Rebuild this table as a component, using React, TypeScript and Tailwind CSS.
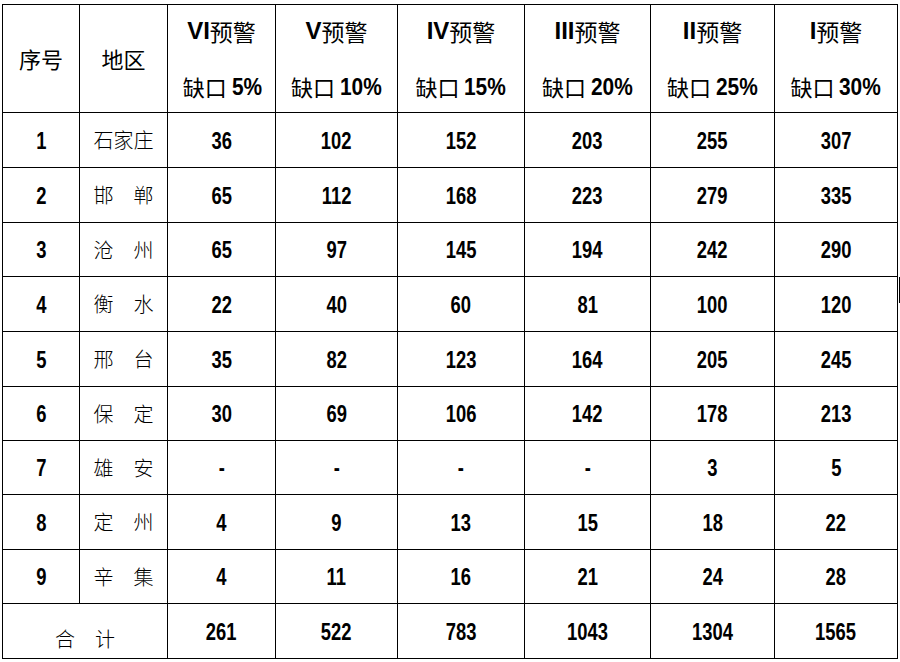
import React from "react";

const levels = [
  { lv: "VI", pct: "5%" },
  { lv: "V", pct: "10%" },
  { lv: "IV", pct: "15%" },
  { lv: "III", pct: "20%" },
  { lv: "II", pct: "25%" },
  { lv: "I", pct: "30%" },
];

const rows: { n: string; name: string; v: string[]; h: string }[] = [
  { n: "1", name: "石家庄", v: ["36", "102", "152", "203", "255", "307"], h: "h-[55px]" },
  { n: "2", name: "邯　郸", v: ["65", "112", "168", "223", "279", "335"], h: "h-[55px]" },
  { n: "3", name: "沧　州", v: ["65", "97", "145", "194", "242", "290"], h: "h-[54px]" },
  { n: "4", name: "衡　水", v: ["22", "40", "60", "81", "100", "120"], h: "h-[55px]" },
  { n: "5", name: "邢　台", v: ["35", "82", "123", "164", "205", "245"], h: "h-[55px]" },
  { n: "6", name: "保　定", v: ["30", "69", "106", "142", "178", "213"], h: "h-[54px]" },
  { n: "7", name: "雄　安", v: ["-", "-", "-", "-", "3", "5"], h: "h-[54px]" },
  { n: "8", name: "定　州", v: ["4", "9", "13", "15", "18", "22"], h: "h-[55px]" },
  { n: "9", name: "辛　集", v: ["4", "11", "16", "21", "24", "28"], h: "h-[54px]" },
];

const totals = ["261", "522", "783", "1043", "1304", "1565"];

const numFont = "font-['Liberation_Sans',Arial,sans-serif] font-bold leading-none";
const cjk = "font-['Noto_Sans_CJK_SC',sans-serif]";
const cell = "border border-black text-center align-middle p-0";

function Num({ v }: { v: string }) {
  return <span className={`inline-block scale-x-[0.8] translate-y-[2px] ${numFont} text-[23px]`}>{v}</span>;
}

export default function App() {
  return (
    <div className="relative w-[900px] h-[662px] bg-white pt-[4px] pl-[2px] text-black">
      <table className="table-fixed border-collapse w-[895px]">
        <colgroup>
          <col className="w-[77px]" />
          <col className="w-[88px]" />
          <col className="w-[108px]" />
          <col className="w-[122px]" />
          <col className="w-[127px]" />
          <col className="w-[126px]" />
          <col className="w-[124px]" />
          <col className="w-[123px]" />
        </colgroup>
        <thead>
          <tr className="h-[108px]">
            <th className={`${cell} ${cjk} font-normal text-[22px]`}>序号</th>
            <th className={`${cell} ${cjk} font-normal text-[22px]`}>地区</th>
            {levels.map((l) => (
              <th key={l.lv} className={`${cell} font-normal`}>
                <div className="flex flex-col items-center">
                  <div className="h-[55px] flex items-center justify-center -mt-[2px]">
                    <span className="font-['Liberation_Sans',sans-serif] font-bold text-[24px]">{l.lv}</span>
                    <span className={`${cjk} text-[23px]`}>预警</span>
                  </div>
                  <div className="h-[53px] flex items-center justify-center pt-[3px]">
                    <span className={`${cjk} text-[22px]`}>缺口</span>
                    <span className={`inline-block scale-x-[0.87] origin-left ${numFont} text-[24px] ml-[5px] -mr-[6px]`}>
                      {l.pct}
                    </span>
                  </div>
                </div>
              </th>
            ))}
          </tr>
        </thead>
        <tbody>
          {rows.map((r) => (
            <tr key={r.n} className={r.h}>
              <td className={cell}>
                <Num v={r.n} />
              </td>
              <td className={`${cell} ${cjk} text-[20px] font-light`}>{r.name}</td>
              {r.v.map((v, i) => (
                <td key={i} className={cell}>
                  <Num v={v} />
                </td>
              ))}
            </tr>
          ))}
          <tr className="h-[55px]">
            <td colSpan={2} className={`${cell} ${cjk} text-[20px] font-light pt-[16px]`}>
              合　计
            </td>
            {totals.map((v, i) => (
              <td key={i} className={cell}>
                <Num v={v} />
              </td>
            ))}
          </tr>
        </tbody>
      </table>
      <div className="absolute left-[899px] top-[277px] w-px h-[26px] bg-black" />
    </div>
  );
}
